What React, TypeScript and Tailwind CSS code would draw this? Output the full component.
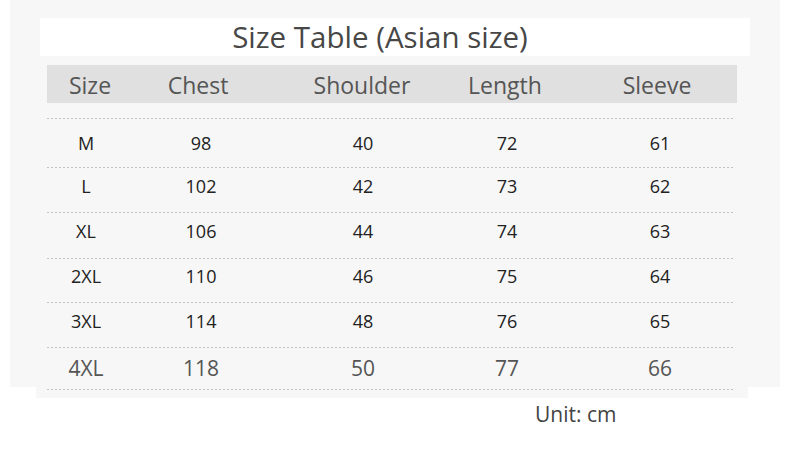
import React from "react";

const font = { fontFamily: '"Open Sans", "Noto Sans", sans-serif' };

const rows = [
  { v: ["M", "98", "40", "72", "61"], cls: "h-[48px] pt-[1px]" },
  { v: ["L", "102", "42", "73", "62"], cls: "h-[44px] pb-[8px]" },
  { v: ["XL", "106", "44", "74", "63"], cls: "h-[45px] pb-[8px]" },
  { v: ["2XL", "110", "46", "75", "64"], cls: "h-[43px] pb-[8px]" },
  { v: ["3XL", "114", "48", "76", "65"], cls: "h-[44px] pb-[8px]" },
];

const Dashed = () => (
  <div className="h-px w-[688px] bg-[linear-gradient(to_right,#c2c2c2_50%,transparent_50%)] bg-[length:4px_1px]" />
);

export default function App() {
  return (
    <div className="w-[790px] h-[452px] bg-white overflow-hidden" style={font}>
      <div className="ml-[10px] w-[770px] h-[387px] bg-[#f7f7f7] pt-[18px]">
        <div className="ml-[30px] w-[710px] h-[38px] bg-white flex items-center justify-center pr-[30px]">
          <span className="text-[29.5px] leading-none text-[#474747] pb-[1px]">Size Table (Asian size)</span>
        </div>

        <div className="ml-[26px] w-[712px] h-[342px] bg-[#f7f7f7] pt-[9px] px-[11px]">
          <div className="h-[38px] bg-[#e0e0e0] grid grid-cols-[86px_130px_198px_88px_216px] items-center text-[23px] text-[#555] pt-[3px]">
            <span className="text-center">Size</span>
            <span className="text-center">Chest</span>
            <span className="text-center">Shoulder</span>
            <span className="text-center">Length</span>
            <span className="text-center">Sleeve</span>
          </div>

          <div className="mt-[15px]">
            {rows.map((r) => (
              <div key={r.v[0]}>
                <Dashed />
                <div
                  className={`grid grid-cols-[78px_152px_172px_116px_190px] items-center text-[18px] text-[#222] ${r.cls}`}
                >
                  {r.v.map((c, i) => (
                    <span key={i} className="text-center">
                      {c}
                    </span>
                  ))}
                </div>
              </div>
            ))}
            <Dashed />
            <div className="h-[41px] grid grid-cols-[78px_152px_172px_116px_190px] items-center text-[21px] text-[#555]">
              <span className="text-center">4XL</span>
              <span className="text-center">118</span>
              <span className="text-center">50</span>
              <span className="text-center">77</span>
              <span className="text-center">66</span>
            </div>
            <Dashed />
          </div>
        </div>
      </div>
      <div className="pl-[535px] pt-[15px] text-[21px] leading-[24px] text-[#444]">Unit: cm</div>
    </div>
  );
}
